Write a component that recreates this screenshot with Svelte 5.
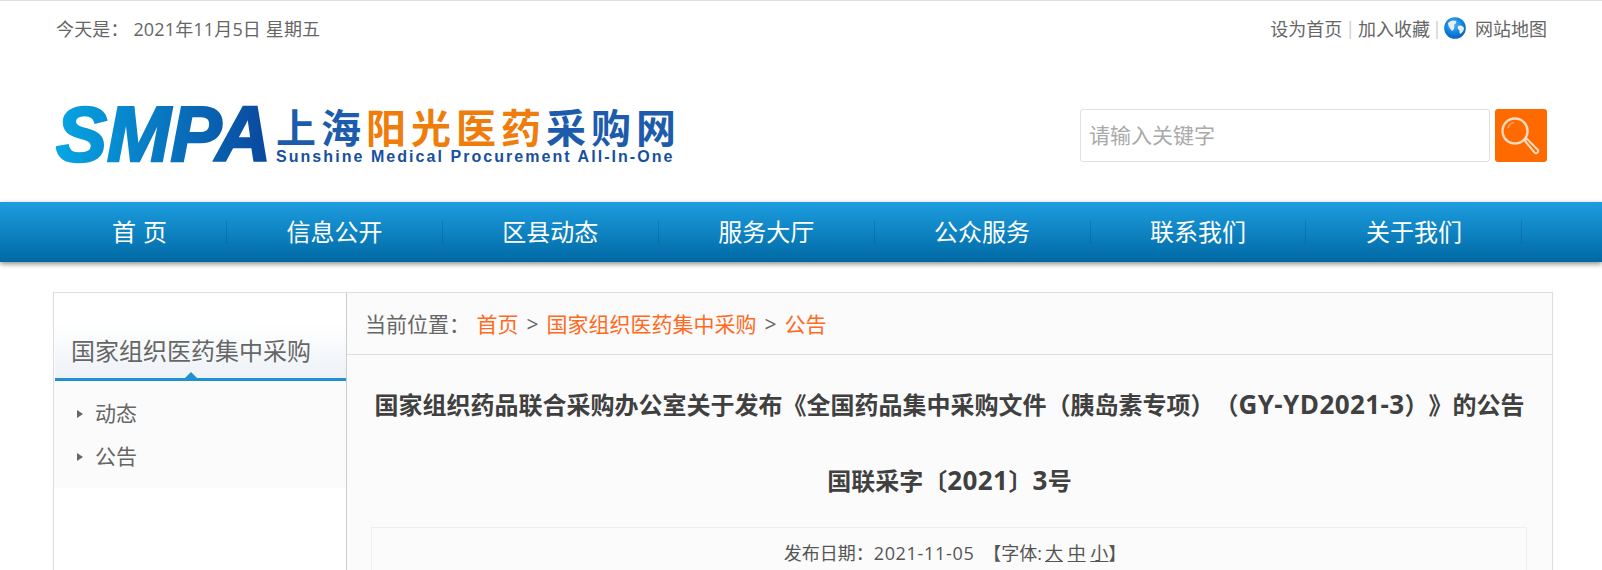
<script>
  const navItems = ['信息公开', '区县动态', '服务大厅', '公众服务', '联系我们', '关于我们'];
  const sideItems = ['动态', '公告'];
</script>

<div class="page">
  <div class="wrap topbar">
    <div class="today">今天是： 2021年11月5日 星期五</div>
    <div class="links">
      <a href="#a">设为首页</a><span class="sep wide">|</span><a href="#b">加入收藏</a><span class="sep">|</span>
      <svg class="globe" viewBox="0 0 22 22" aria-hidden="true">
        <defs>
          <radialGradient id="g" cx="45%" cy="35%" r="70%">
            <stop offset="0" stop-color="#4db4f2" />
            <stop offset="0.6" stop-color="#0f7fdc" />
            <stop offset="1" stop-color="#0a5cb8" />
          </radialGradient>
        </defs>
        <circle cx="11" cy="11" r="10.8" fill="url(#g)" />
        <path d="M4 6c3-3 6-3 8-2 1 2-1 3-2 4 1 2 0 5-2 6-1-2-4-4-4-8zM14 9c3-1 5 0 6 2 0 3-2 5-4 6-1-2 0-3-1-4-1-1-2-2-1-4z" fill="#e4eff6" />
      </svg>
      <a class="map" href="#c">网站地图</a>
    </div>
  </div>

  <div class="wrap head">
    <div class="logo">
      <svg class="smpa" viewBox="0 0 240 64" width="240" height="64">
        <defs>
          <linearGradient id="sm" x1="0" x2="1" y1="0" y2="0">
            <stop offset="0" stop-color="#06a6e4" />
            <stop offset="0.95" stop-color="#0a4ba0" />
          </linearGradient>
        </defs>
        <text class="smpa-text" x="0" y="58" textLength="215" lengthAdjust="spacingAndGlyphs" fill="url(#sm)" stroke="url(#sm)" stroke-width="2.500">SMPA</text>
      </svg>
      <div class="logo-text">
        <div class="cn">上海<em>阳光医药</em>采购网</div>
        <div class="en">Sunshine Medical Procurement All-In-One</div>
      </div>
    </div>
    <div class="search">
      <input type="text" placeholder="请输入关键字" />
      <button type="button" aria-label="搜索">
        <svg viewBox="0 0 52 53" width="52" height="53" fill="none" stroke="#ffe6d2" stroke-opacity="0.9">
          <circle cx="20" cy="22" r="12.5" stroke-width="2.400" />
          <path d="M13 19c1-3 3-5 6-5.500" stroke-width="1.500" stroke-opacity="0.5" />
          <path d="M29.500 31.500l2-2 11 11c1 1 1 2 0 3s-2 1-3 0z" stroke-width="2" />
        </svg>
      </button>
    </div>
  </div>

  <nav class="nav">
    <div class="wrap nav-row">
      <a class="first" href="#home">首 页</a>
      {#each navItems as item}
        <a href="#n">{item}</a>
      {/each}
    </div>
  </nav>

  <div class="wrap box">
    <aside class="side">
      <h3>国家组织医药集中采购<i class="up"></i></h3>
      <ul>
        {#each sideItems as item}
          <li><i class="tri"></i>{item}</li>
        {/each}
      </ul>
    </aside>
    <main class="main">
      <div class="crumb">
        <span class="cur">当前位置：</span>
        <a href="#h">首页</a><span class="gt">&gt;</span><a href="#o">国家组织医药集中采购</a><span class="gt">&gt;</span><a href="#p">公告</a>
      </div>
      <h1>国家组织药品联合采购办公室关于发布《全国药品集中采购文件（胰岛素专项）（<span class="lat">GY-YD2021-3</span>）》的公告</h1>
      <h2>国联采字〔<span class="lat">2021</span>〕<span class="lat">3</span>号</h2>
      <div class="meta">
        发布日期：<span class="date">2021-11-05</span> <span class="font">【字体:<u class="big">大</u> <u>中</u> <u>小</u>】</span>
      </div>
    </main>
  </div>
</div>

<style>
  :global(body) {
    margin: 0;
    background: #fff;
    font-family: "Open Sans", "Noto Sans CJK SC", sans-serif;
    color: #666;
  }
  a { color: inherit; text-decoration: none; }
  .page {
    height: 570px;
    overflow: hidden;
    border-top: 1px solid #ddd;
    box-sizing: border-box;
    text-spacing-trim: space-all;
  }
  .wrap { width: 1500px; margin-left: 53px; box-sizing: border-box; }

  .topbar {
    height: 57px;
    padding: 0 6px 3px 3px;
    display: flex;
    justify-content: space-between;
    align-items: center;
    font-size: 18px;
    color: #666;
  }
  .today { letter-spacing: .15px; }
  .links { display: flex; align-items: center; }
  .sep { color: #ccc; margin: 0 2px; font-size: 18px; line-height: 1; }
  .sep.wide { margin: 0 3px; }
  .globe { width: 22px; height: 22px; margin-right: 9px; }

  .head {
    height: 144px;
    padding: 47px 6px 0 3px;
    display: flex;
    justify-content: space-between;
    align-items: flex-start;
  }
  .logo { display: flex; width: 620px; height: 60px; }
  .smpa { flex: none; display: block; margin-right: -20px; margin-top: -2px; }
  .smpa-text { font: italic 700 78px "Liberation Sans", sans-serif; }
  .logo-text { width: 397px; }
  .cn {
    font: 700 40px/42px "Noto Sans CJK SC", sans-serif;
    letter-spacing: 5px;
    color: #1d5cac;
    white-space: nowrap;
  }
  .cn em { font-style: normal; color: #ee7d0c; }
  .en {
    font: 700 16px/20px "Liberation Sans", sans-serif;
    color: #184f9e;
    letter-spacing: 2.050px;
    white-space: nowrap;
  }

  .search { display: flex; gap: 5px; margin-top: 4px; }
  .search input {
    width: 410px;
    height: 53px;
    box-sizing: border-box;
    border: 1px solid #e0e0e0;
    border-radius: 3px;
    padding: 0 8px 4px;
    font: 21px "Noto Sans CJK SC", sans-serif;
    outline: none;
    background: #fff;
  }
  .search input::placeholder { color: #aaa; }
  .search button {
    width: 52px;
    height: 53px;
    border: 0;
    padding: 0;
    background: #ff6a00;
    border-radius: 3px;
    display: block;
  }
  .search svg { display: block; }

  .nav {
    height: 60px;
    background: linear-gradient(#1d9ddf, #0069a4);
    box-shadow: 0 2px 5px rgba(0, 0, 0, .45);
  }
  .nav-row { display: flex; height: 60px; align-items: center; }
  .nav-row a {
    width: 215.900px;
    flex: none;
    height: 24px;
    line-height: 22px;
    text-align: center;
    color: #fff;
    font-size: 24px;
    border-right: 1px solid rgba(0, 70, 120, .25);
    box-sizing: border-box;
    font-family: "Noto Sans CJK SC", sans-serif;
  }
  .nav-row a.first { width: 174px; word-spacing: 1.500px; }

  .box {
    margin-top: 30px;
    display: flex;
    border: 1px solid #ddd;
    min-height: 400px;
    align-items: stretch;
  }
  .side { width: 292px; flex: none; border-right: 1px solid #ccc; box-sizing: content-box; }
  .side h3 {
    position: relative;
    margin: 30px 0 0 1px;
    padding: 5px 0 0 16px;
    box-sizing: border-box;
    line-height: 46px;
    font-size: 24px;
    font-weight: 400;
    color: #666;
    background: linear-gradient(#fff, #edf2f7);
    border-bottom: 3px solid #2190d0;
    height: 58px;
  }
  .up {
    position: absolute;
    left: 130px;
    bottom: 0;
    width: 0;
    height: 0;
    border: 6px solid transparent;
    border-top: 0;
    border-bottom-color: #2190d0;
  }
  .side ul {
    list-style: none;
    margin: 0;
    padding: 11px 0 10px 23px;
    background: #fbfbfb;
  }
  .side li {
    height: 43px;
    line-height: 43px;
    font-size: 21px;
    display: flex;
    align-items: center;
    gap: 12px;
  }
  .tri {
    width: 0;
    height: 0;
    border: 4px solid transparent;
    border-left: 6px solid #666;
    border-right: 0;
  }

  .main { flex: 1; background: #fbfbfb; }
  .crumb {
    height: 62px;
    line-height: 62px;
    padding-left: 18px;
    font-size: 21px;
    color: #666;
    border-bottom: 1px solid #ddd;
    box-sizing: border-box;
    white-space: nowrap;
  }
  .cur { margin-right: 1px; }
  .crumb a { color: #ff6a1f; }
  .gt { margin: 0 8px; }
  h1, h2 {
    margin: 0;
    text-align: center;
    font-size: 24px;
    line-height: 76px;
    font-weight: 700;
    color: #404040;
    white-space: nowrap;
  }
  h1 { margin-top: 12px; }
  .lat { font-size: 26px; letter-spacing: .4px; line-height: 1; }
  .meta {
    margin: 8px 25px 0 24px;
    border: 1px solid #eee;
    border-bottom: 0;
    height: 100px;
    padding: 11px 0 0 12px;
    box-sizing: border-box;
    line-height: 28px;
    text-align: center;
    font-size: 18px;
    color: #555;
  }
  .date { letter-spacing: .7px; }
  .font { margin-left: 4px; }
  .big { margin-left: 3px; }
</style>
